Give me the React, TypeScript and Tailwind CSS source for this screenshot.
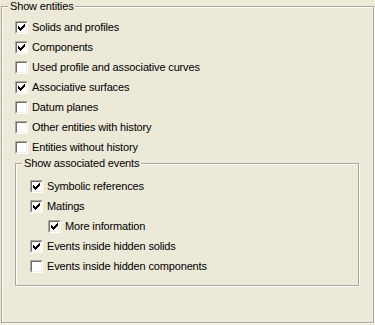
const CHECK: [number, number, number][] = [
  [6, 0, 1],
  [5, 1, 2],
  [0, 2, 1],
  [4, 2, 3],
  [0, 3, 2],
  [3, 3, 3],
  [0, 4, 5],
  [1, 5, 3],
  [2, 6, 1],
];

function Box({ checked }: { checked: boolean }) {
  return (
    <div className="w-[13px] h-[13px] shrink-0 border border-t-[#ACA899] border-l-[#ACA899] border-b-white border-r-white">
      <div className="w-full h-full flex items-center justify-center bg-white border border-t-[#716F64] border-l-[#716F64] border-b-[#F1EFE2] border-r-[#F1EFE2]">
        {checked && (
          <svg width="7" height="7" viewBox="0 0 7 7" shapeRendering="crispEdges">
            {CHECK.map(([x, y, w], i) => (
              <rect key={i} x={x} y={y} width={w} height={1} fill="#000" />
            ))}
          </svg>
        )}
      </div>
    </div>
  );
}

function Row({ label, checked, indent = "" }: { label: string; checked: boolean; indent?: string }) {
  return (
    <div className={`h-[20px] flex items-center gap-[4px] ${indent}`}>
      <Box checked={checked} />
      <span className="whitespace-nowrap">{label}</span>
    </div>
  );
}

function Legend({ text }: { text: string }) {
  return (
    <div className="-mt-[7px] ml-[6px] w-fit px-[2px] bg-[#ECE9D8] leading-[13px] whitespace-nowrap">
      {text}
    </div>
  );
}

const entities = [
  { label: "Solids and profiles", checked: true },
  { label: "Components", checked: true },
  { label: "Used profile and associative curves", checked: false },
  { label: "Associative surfaces", checked: true },
  { label: "Datum planes", checked: false },
  { label: "Other entities with history", checked: false },
  { label: "Entities without history", checked: false },
];

export default function App() {
  return (
    <div
      className="w-[375px] h-[325px] bg-[#ECE9D8] pt-[6px] pl-[1px] text-[11px] tracking-[-0.15px] text-black"
      style={{ fontFamily: '"Liberation Sans", Arial, sans-serif' }}
    >
      <div className="w-[373px] h-[317px] border border-[#ACA899] shadow-[inset_1px_1px_0_#fff,1px_1px_0_#fff]">
        <Legend text="Show entities" />
        <div className="mt-[4px] pl-[13px]">
          {entities.map((e) => (
            <Row key={e.label} label={e.label} checked={e.checked} />
          ))}
        </div>

        <div className="mt-[6px] ml-[13px] w-[344px] h-[123px] border border-[#ACA899] shadow-[inset_1px_1px_0_#fff,1px_1px_0_#fff]">
          <Legend text="Show associated events" />
          <div className="mt-[6px] pl-[14px]">
            <Row label="Symbolic references" checked />
            <Row label="Matings" checked />
            <Row label="More information" checked indent="pl-[18px]" />
            <Row label="Events inside hidden solids" checked />
            <Row label="Events inside hidden components" checked={false} />
          </div>
        </div>
      </div>
    </div>
  );
}
